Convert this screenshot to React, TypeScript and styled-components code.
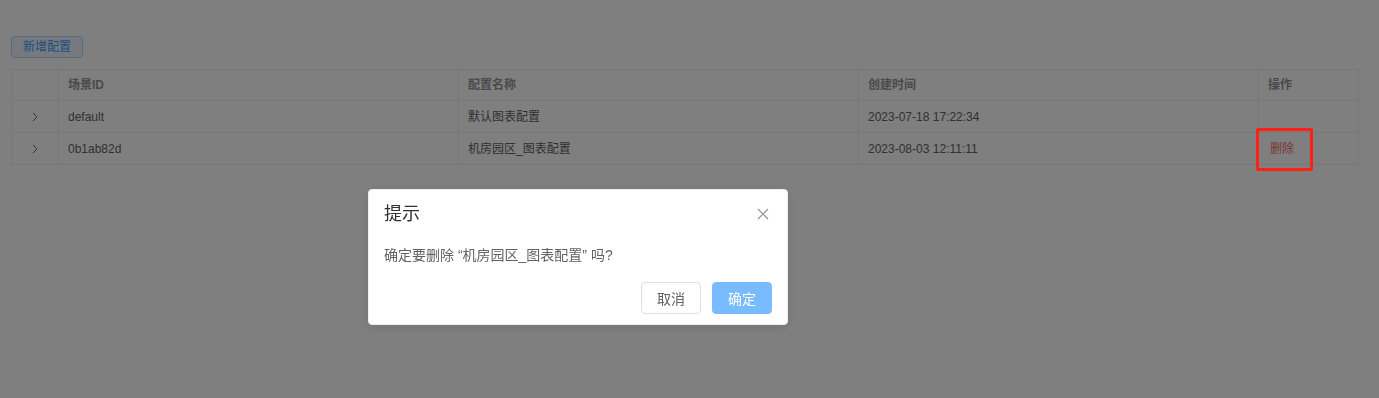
import styled, { createGlobalStyle } from 'styled-components';

const GlobalStyle = createGlobalStyle`
  html, body {
    margin: 0;
    padding: 0;
    background: #fff;
    font-family: "Liberation Sans", "Noto Sans CJK SC", sans-serif;
  }
`;

const Page = styled.main`
  padding: 36px 21px 0 11px;
  min-height: 398px;
  box-sizing: border-box;
`;

const PlainButton = styled.button`
  display: block;
  height: 22px;
  padding: 0 11px;
  font-family: inherit;
  font-size: 12px;
  line-height: 20px;
  color: #409eff;
  background: #ecf5ff;
  border: 1px solid #b3d8ff;
  border-radius: 3px;
  cursor: pointer;
`;

const Table = styled.table`
  margin-top: 11px;
  width: 1347px;
  border-collapse: collapse;
  table-layout: fixed;
  font-size: 12px;
  line-height: 16px;
  color: #606266;
  border: 1px solid #ebeef5;
`;

const HeadCell = styled.th<{ $w: number }>`
  box-sizing: border-box;
  width: ${(p) => p.$w}px;
  height: 31px;
  padding: 0 9px;
  text-align: left;
  font-weight: bold;
  color: #909399;
  border: 1px solid #ebeef5;
`;

const Cell = styled.td<{ $center?: boolean }>`
  box-sizing: border-box;
  height: 32px;
  padding: 0 9px;
  text-align: ${(p) => (p.$center ? 'center' : 'left')};
  border: 1px solid #ebeef5;
  vertical-align: middle;
  white-space: nowrap;
`;

const Chevron = styled.svg`
  display: block;
  margin: 0 auto;
  color: #606266;
`;

const DeleteLink = styled.span`
  position: relative;
  display: inline-block;
  margin-left: 2px;
  line-height: 16px;
  color: #f56c6c;
  cursor: pointer;

  &::after {
    content: '';
    position: absolute;
    left: -14px;
    right: -19px;
    top: -13px;
    bottom: -14px;
    border: 3px solid #ff2116;
    border-radius: 2px;
    z-index: 3000;
  }
`;

const Overlay = styled.div`
  position: fixed;
  inset: 0;
  z-index: 2000;
  background: rgba(0, 0, 0, 0.5);
  display: flex;
  align-items: flex-start;
  padding: 189px 0 0 368px;
`;

const MessageBox = styled.div`
  width: 420px;
  box-sizing: border-box;
  padding-bottom: 10px;
  background: #fff;
  border: 1px solid #ebeef5;
  border-radius: 4px;
  box-shadow: 0 2px 12px rgba(0, 0, 0, 0.1);
`;

const Header = styled.div`
  display: flex;
  align-items: center;
  justify-content: space-between;
  padding: 15px 15px 10px;
`;

const Title = styled.span`
  font-size: 18px;
  line-height: 1;
  color: #303133;
`;

const CloseIcon = styled.svg`
  color: #909399;
  margin-right: 3px;
`;

const Content = styled.div`
  padding: 10px 15px;
  font-size: 14px;
  line-height: 24px;
  color: #606266;
`;

const Buttons = styled.div`
  display: flex;
  justify-content: flex-end;
  gap: 11px;
  padding: 5px 15px 0;
`;

const DialogButton = styled.button<{ $primary?: boolean }>`
  height: 32px;
  padding: 0 15px;
  font-family: inherit;
  font-size: 14px;
  border-radius: 4px;
  cursor: pointer;
  color: ${(p) => (p.$primary ? '#fff' : '#606266')};
  background: ${(p) => (p.$primary ? '#79bbff' : '#fff')};
  border: 1px solid ${(p) => (p.$primary ? '#79bbff' : '#dcdfe6')};
`;

const rows = [
  { id: 'default', name: '默认图表配置', time: '2023-07-18 17:22:34', deletable: false },
  { id: '0b1ab82d', name: '机房园区_图表配置', time: '2023-08-03 12:11:11', deletable: true },
];

const ArrowRight = () => (
  <Chevron width="6" height="10" viewBox="0 0 6 10" fill="none">
    <polyline points="1,1 5,5 1,9" stroke="currentColor" strokeWidth="1" />
  </Chevron>
);

export default function App() {
  return (
    <>
      <GlobalStyle />
      <Page>
        <PlainButton>新增配置</PlainButton>
        <Table>
          <thead>
            <tr>
              <HeadCell $w={47} />
              <HeadCell $w={400}>场景ID</HeadCell>
              <HeadCell $w={400}>配置名称</HeadCell>
              <HeadCell $w={400}>创建时间</HeadCell>
              <HeadCell $w={100}>操作</HeadCell>
            </tr>
          </thead>
          <tbody>
            {rows.map((r) => (
              <tr key={r.id}>
                <Cell $center>
                  <ArrowRight />
                </Cell>
                <Cell>{r.id}</Cell>
                <Cell>{r.name}</Cell>
                <Cell>{r.time}</Cell>
                <Cell>{r.deletable && <DeleteLink>删除</DeleteLink>}</Cell>
              </tr>
            ))}
          </tbody>
        </Table>
      </Page>
      <Overlay>
        <MessageBox>
          <Header>
            <Title>提示</Title>
            <CloseIcon width="12" height="12" viewBox="0 0 12 12">
              <path d="M1 1 L11 11 M11 1 L1 11" stroke="currentColor" strokeWidth="1.2" />
            </CloseIcon>
          </Header>
          <Content>确定要删除 “机房园区_图表配置” 吗?</Content>
          <Buttons>
            <DialogButton>取消</DialogButton>
            <DialogButton $primary>确定</DialogButton>
          </Buttons>
        </MessageBox>
      </Overlay>
    </>
  );
}
